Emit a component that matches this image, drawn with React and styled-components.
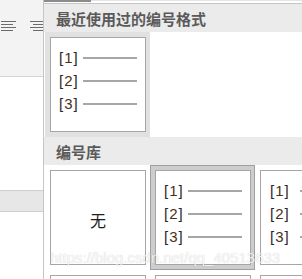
import React from "react";
import styled, { createGlobalStyle } from "styled-components";

const Global = createGlobalStyle`
  html, body { margin: 0; padding: 0; background: #ffffff; }
  body { width: 302px; height: 279px; overflow: hidden; font-family: "Liberation Sans", "Noto Sans CJK SC", sans-serif; }
  #root { width: 302px; height: 279px; }
`;

const Page = styled.div`
  position: relative;
  display: flex;
  width: 302px;
  height: 279px;
  overflow: hidden;
  background: #ffffff;
`;

const LeftColumn = styled.div`
  width: 43px;
  flex: none;
  display: flex;
  flex-direction: column;
  overflow: hidden;
`;

const Ribbon = styled.div`
  flex: none;
  background: #f3f3f3;
  border-bottom: 1px solid #d4d4d4;
  display: flex;
  gap: 14px;
  padding: 21px 0 0 1px;
  box-sizing: border-box;
  height: 77px;
`;

const Gap = styled.div`
  height: ${(p) => p.h}px;
  flex: none;
`;

const Band = styled.div`
  height: 22px;
  flex: none;
  background: #e7e7e7;
  border-top: 1px solid #cfcfcf;
  border-bottom: 1px solid #cfcfcf;
  box-sizing: border-box;
`;

const Panel = styled.div`
  flex: 1;
  display: flex;
  flex-direction: column;
  border-left: 1px solid #c6c6c6;
  min-width: 0;
`;

const TopStrip = styled.div`
  height: 3px;
  flex: none;
  display: flex;
  align-items: flex-start;
  border-bottom: 1px solid #c6c6c6;
`;

const ButtonEdge = styled.div`
  width: 47px;
  height: 2px;
  background: #8c8c8c;
`;

const StripRest = styled.div`
  flex: 1;
  height: 1px;
  background: #e4e4e4;
`;

const Header = styled.div`
  height: 28px;
  flex: none;
  background: #ebebeb;
  display: flex;
  align-items: center;
  padding-left: 12px;
  font-family: "Noto Sans CJK SC", sans-serif;
  font-weight: 700;
  font-size: 15px;
  color: #5a5a5a;
`;

const Grid = styled.div`
  display: flex;
  flex: none;
  padding-left: 1px;
  background: #ffffff;
`;

const Cell = styled.div`
  width: 105px;
  height: 105px;
  flex: none;
  box-sizing: border-box;
  padding: ${(p) => (p.selected ? "4px 3px 3px 4px" : "5px 4px 4px 5px")};
  background: ${(p) => (p.selected ? "#cdcdcd" : p.hover ? "#e1e1e1" : "transparent")};
  border: ${(p) => (p.selected ? "1px solid #a0a0a0" : "none")};
`;

const Card = styled.div`
  width: 96px;
  height: 95px;
  box-sizing: border-box;
  border: 1px solid #a6a6a6;
  background: #ffffff;
  display: flex;
  flex-direction: column;
  padding: ${(p) => (p.center ? "0" : `8px 0 0 ${p.indent}px`)};
  align-items: ${(p) => (p.center ? "center" : "stretch")};
  justify-content: ${(p) => (p.center ? "center" : "flex-start")};
  overflow: hidden;
`;

const Row = styled.div`
  height: 23px;
  display: flex;
  align-items: center;
  gap: ${(p) => p.gap}px;
`;

const Label = styled.span`
  font-family: "Liberation Sans", sans-serif;
  font-size: 15px;
  letter-spacing: 1px;
  color: #2a2530;
  line-height: 1;
  width: 19px;
  flex: none;
  white-space: nowrap;
`;

const Digit = styled.span`
  color: #4a3018;
`;

const Rule = styled.div`
  width: 54px;
  height: 2px;
  flex: none;
  background: #a6a6a6;
`;

const None = styled.span`
  font-family: "Noto Sans CJK SC", sans-serif;
  font-size: 16px;
  color: #1e1e1e;
  margin-top: 4px;
`;

const Watermark = styled.div`
  position: absolute;
  left: 50px;
  top: 249px;
  font-family: "Liberation Sans", sans-serif;
  font-size: 15px;
  color: rgba(255, 255, 255, 0.85);
  text-shadow: 0 0 1px rgba(0, 0, 0, 0.22);
  white-space: nowrap;
  pointer-events: none;
`;

const AlignIcon = ({ right }) => (
  <svg width="15" height="11" viewBox="0 0 15 11" style={{ flex: "none" }}>
    <g stroke="#6b6b6b" strokeWidth="1">
      <line x1="0" y1="0.5" x2="15" y2="0.5" />
      <line x1={right ? 3 : 0} y1="3.5" x2={right ? 15 : 12} y2="3.5" />
      <line x1="0" y1="6.5" x2="15" y2="6.5" />
      <line x1={right ? 3 : 0} y1="9.5" x2={right ? 15 : 12} y2="9.5" />
    </g>
  </svg>
);

const NumberCard = ({ indent = 8, gap = 5 }) => (
  <Card indent={indent}>
    {[1, 2, 3].map((n) => (
      <Row key={n} gap={gap}>
        <Label>
          [<Digit>{n}</Digit>]
        </Label>
        <Rule />
      </Row>
    ))}
  </Card>
);

export default function App() {
  return (
    <>
      <Global />
      <Page>
        <LeftColumn>
          <Ribbon>
            <AlignIcon />
            <AlignIcon right />
          </Ribbon>
          <Gap h={113} />
          <Band />
        </LeftColumn>
        <Panel>
          <TopStrip>
            <ButtonEdge />
            <StripRest />
          </TopStrip>
          <Header>最近使用过的编号格式</Header>
          <Grid>
            <Cell hover>
              <NumberCard />
            </Cell>
          </Grid>
          <Header>编号库</Header>
          <Grid>
            <Cell>
              <Card center>
                <None>无</None>
              </Card>
            </Cell>
            <Cell selected>
              <NumberCard />
            </Cell>
            <Cell>
              <NumberCard indent={9} gap={11} />
            </Cell>
          </Grid>
          <Grid>
            <Cell>
              <Card />
            </Cell>
            <Cell>
              <Card />
            </Cell>
            <Cell>
              <Card />
            </Cell>
          </Grid>
        </Panel>
        <Watermark>https://blog.csdn.net/qq_40513633</Watermark>
      </Page>
    </>
  );
}
